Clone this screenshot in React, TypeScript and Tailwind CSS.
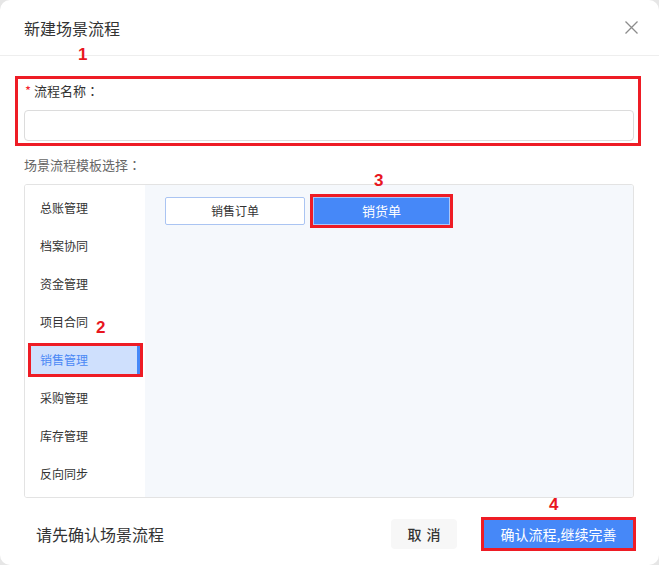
const menu = ["总账管理", "档案协同", "资金管理", "项目合同", "销售管理", "采购管理", "库存管理", "反向同步"];

function Mark({ n, className }: { n: string; className: string }) {
  return (
    <span
      className={`absolute text-[17px] leading-none font-bold text-[#e8161f] ${className}`}
      style={{ fontFamily: '"Liberation Sans", Arial, sans-serif' }}
    >
      {n}
    </span>
  );
}

function Colon() {
  return <span style={{ fontFamily: '"Noto Sans CJK TC", sans-serif' }}>：</span>;
}

export default function App() {
  return (
    <div
      className="w-[659px] h-[565px] bg-[#e6e6e6]"
      style={{ fontFamily: '"Noto Sans CJK SC", "Noto Sans", sans-serif' }}
    >
      <div className="relative w-full h-full rounded-[10px] bg-white flex flex-col">
        {/* header */}
        <div className="h-[56px] shrink-0 flex items-center justify-between pl-[24px] pr-[21px] border-b border-[#eeeeee]">
          <span className="text-[16px] text-[#333333]">新建场景流程</span>
          <svg width="13" height="13" viewBox="0 0 13 13" className="text-[#8c8c8c]">
            <path d="M0.5 0.5 12.5 12.5 M12.5 0.5 0.5 12.5" stroke="currentColor" strokeWidth="1.3" fill="none" />
          </svg>
        </div>

        {/* name field */}
        <div className="mt-[20px] ml-[15px] w-[626px] h-[70px] border-[3px] border-[#ee1c25] pt-[2px]">
          <div className="pl-[7px] text-[13px] leading-[20px] text-[#333333]">
            <span className="text-[#f5222d] mr-[3px]">*</span>流程名称<Colon />
          </div>
          <div className="mt-[9px] ml-[6px] w-[610px] h-[31px] rounded-[4px] border border-[#dcdcdc] bg-white" />
        </div>

        <div className="mt-[9px] ml-[24px] text-[13px] leading-[20px] text-[#666666]">
          场景流程模板选择<Colon />
        </div>

        {/* template picker */}
        <div className="mt-[9px] ml-[24px] w-[610px] h-[314px] shrink-0 rounded-[3px] border border-[#e3e3e3] flex overflow-hidden">
          <div className="w-[120px] bg-white pt-[6px] flex flex-col gap-[4px]">
            {menu.map((m) =>
              m === "销售管理" ? (
                <div key={m} className="relative ml-[3px] w-[115px] h-[34px] flex items-center">
                  <div className="absolute inset-[2px] bg-[#cfe0fd]" />
                  <div className="absolute right-[3px] top-[2px] bottom-[2px] w-[3px] bg-[#4688f8]" />
                  <span className="relative pl-[12px] text-[12px] text-[#4a88f5]">{m}</span>
                  <div className="absolute inset-0 border-[3px] border-[#ee1c25]" />
                </div>
              ) : (
                <div key={m} className="h-[34px] flex items-center pl-[15px] text-[12px] text-[#333333]">
                  {m}
                </div>
              )
            )}
          </div>
          <div className="flex-1 bg-[#f5f8fc] pt-[12px] pl-[20px] flex items-start gap-[8px]">
            <button className="w-[140px] h-[28px] rounded-[2px] border border-[#aac4f2] bg-white text-[12px] text-[#333333]">
              销售订单
            </button>
            <div className="w-[143px] h-[34px] -mt-[3px] -ml-[3px] border-[3px] border-[#ee1c25]">
              <button className="w-full h-full border border-[#a9c7fa] bg-[#4688f8] text-[13px] text-white">销货单</button>
            </div>
          </div>
        </div>

        {/* footer */}
        <div className="mt-[19px] h-[34px] flex items-center pl-[36px] pr-[23px]">
          <span className="text-[16px] text-[#333333]">请先确认场景流程</span>
          <button className="ml-auto w-[66px] h-[30px] rounded-[4px] bg-[#f7f7f7] text-[14px] font-medium text-[#333333] flex items-center justify-center gap-[5px]">
            <span>取</span>
            <span>消</span>
          </button>
          <div className="ml-[24px] w-[155px] h-[34px] border-[3px] border-[#ee1c25]">
            <button className="w-full h-full bg-[#4688f8] text-[14px] text-white">确认流程,继续完善</button>
          </div>
        </div>

        <Mark n="1" className="left-[78px] top-[46px]" />
        <Mark n="2" className="left-[96px] top-[319px]" />
        <Mark n="3" className="left-[374px] top-[172px]" />
        <Mark n="4" className="left-[549px] top-[496px]" />
      </div>
    </div>
  );
}
